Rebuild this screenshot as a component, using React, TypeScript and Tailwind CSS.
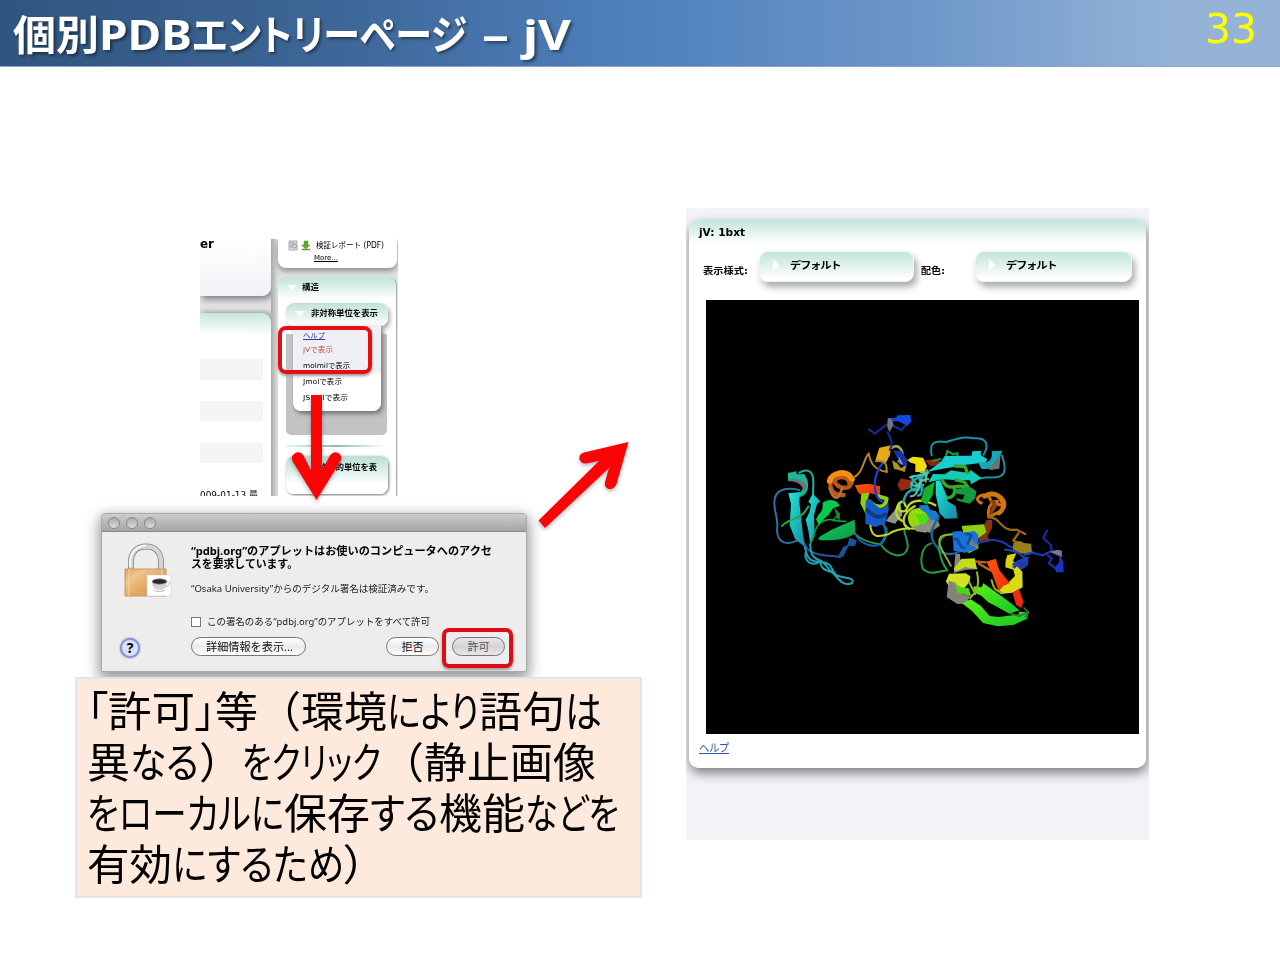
import { useLayoutEffect, useRef, type ReactNode } from 'react';

/** Keeps a run of text on one line and fits it to the given width. */
function Fit({ w, className = '', children }: { w: number; className?: string; children: ReactNode }) {
  const ref = useRef<HTMLSpanElement>(null);
  useLayoutEffect(() => {
    const el = ref.current;
    if (!el) return;
    el.style.transform = 'none';
    const natural = el.getBoundingClientRect().width;
    if (natural > 0) el.style.transform = `scaleX(${w / natural})`;
  }, [w]);
  return (
    <span className={`block shrink-0 whitespace-pre ${className}`} style={{ width: w }}>
      <span ref={ref} className="inline-block origin-left">{children}</span>
    </span>
  );
}

const verdana = "font-['DejaVu_Sans','Noto_Sans_CJK_JP',sans-serif]";
const lucida = "font-['Noto_Sans','Noto_Sans_CJK_JP',sans-serif]";
const palt = "[font-feature-settings:'palt']";

function Header() {
  return (
    <header className="flex h-[67px] shrink-0 items-start justify-between border-b border-[#8aa3c4] bg-[linear-gradient(90deg,#30557f_0%,#3d6596_25%,#4f81bd_50%,#6d97c9_72%,#95b3d7_92%,#95b3d7_100%)]">
      <h1 className={`flex items-baseline pl-[13px] pt-[4px] text-[41px] leading-[60px] font-bold text-white [text-shadow:2px_2px_3px_rgba(0,0,0,0.45)] ${lucida}`}>
        <Fit w={86}>個別</Fit>
        <Fit w={93} className="text-[42px]">PDB</Fit>
        <Fit w={275} className={palt}>エントリーページ</Fit>
        <span className="w-[15px]" />
        <Fit w={27}>–</Fit>
        <span className="w-[14px]" />
        <Fit w={48} className="text-[42px]">jV</Fit>
      </h1>
      <div className={`pr-[23px] text-[40px] leading-[58px] text-[#ffff00] ${verdana}`}>
        <Fit w={52}>33</Fit>
      </div>
    </header>
  );
}

function SiteCrop() {
  return (
    <section className={`relative flex h-[257px] w-[198px] overflow-hidden bg-[#e4e4e6] text-black ${verdana}`}>
      <div className="flex w-[71px] shrink-0 flex-col">
        <div className="h-[57px] shrink-0 rounded-br-[9px] bg-linear-to-b from-white to-[#eff2f7] shadow-[2px_3px_7px_#777]">
          <Fit w={14} className="text-[12px] leading-[11px] font-bold">er</Fit>
        </div>
        <div className="mt-[17px] flex grow flex-col rounded-tr-[9px] bg-[linear-gradient(#c5e7de,#fff_22px)] shadow-[2px_0_6px_#777]">
          <div className="mt-[46px] h-[21px] w-[63px] bg-[#f4f4f4]" />
          <div className="mt-[21px] h-[20px] w-[63px] bg-[#f4f4f4]" />
          <div className="mt-[22px] h-[20px] w-[63px] bg-[#f4f4f4]" />
          <Fit w={58} className="mt-[27px] text-[9px] leading-[11px]">009-01-13 最</Fit>
        </div>
      </div>
      <div className="w-[7px] shrink-0 bg-linear-to-r from-[#aaa] to-[#e0e0e2]" />
      <div className="flex w-[119px] shrink-0 flex-col">
        <div className="h-[29px] shrink-0 rounded-b-[8px] bg-white shadow-[0_3px_6px_#888]">
          <div className="flex items-center pl-[10px] pt-[1px]">
            <svg width="22" height="11" viewBox="0 0 22 11">
              <path d="M1 1h8v9H1z" fill="#ddd" stroke="#aaa" />
              <path d="M2 3h5M2 5h4M2 7h3" stroke="#888" strokeWidth=".7" />
              <circle cx="6.5" cy="6" r="2" fill="#d4dbe0" stroke="#888" strokeWidth=".7" />
              <path d="M16 1h4v4h2l-4.2 4L13.5 5H16zM14 9h8v1h-8z" fill="#62a62c" stroke="#458b1d" strokeWidth=".4" />
            </svg>
            <Fit w={68} className="ml-[6px] text-[8px] leading-[11px]">検証レポート (PDF)</Fit>
          </div>
          <Fit w={24} className="ml-[36px] mt-[2px] text-[7px] leading-[10px] [&>span]:underline">More...</Fit>
        </div>
        <div className="mt-[9px] flex grow flex-col rounded-t-[8px] border-r border-[#aaa] bg-[linear-gradient(#bfe3da,#fff_22px)]">
          <div className="flex h-[26px] shrink-0 items-center pl-[9px] pb-[5px]">
            <svg width="10" height="5" viewBox="0 0 10 5"><path d="M0 0h10L5 5z" fill="#fff" /></svg>
            <Fit w={17} className="ml-[5px] text-[8px] leading-[12px] font-bold">構造</Fit>
          </div>
          <div className="relative z-10 ml-[8px] flex h-[23px] w-[102px] shrink-0 items-center rounded-[8px] bg-linear-to-b from-[#bee2da] to-white pl-[9px] pb-[2px] shadow-[2px_3px_4px_#aaa]">
            <svg width="10" height="6" viewBox="0 0 10 6"><path d="M0 0h10L5 6z" fill="#fff" /></svg>
            <Fit w={67} className="ml-[6px] text-[8px] leading-[12px] font-bold">非対称単位を表示</Fit>
          </div>
          <div className="-mt-px ml-[8px] flex h-[110px] w-[101px] shrink-0 items-start rounded-b-[5px] bg-[linear-gradient(transparent_9px,#c3c3c3_9px)] pl-[7px]">
            <div className="relative z-10 h-[86px] w-[88px] rounded-b-[8px] bg-[linear-gradient(#eef0f3_0_46px,#fff_50px)] pl-[10px] pt-[5px] text-[7px] shadow-[2px_3px_4px_#777]">
              <Fit w={22} className="leading-[13px] text-[#3333aa] [&>span]:underline">ヘルプ</Fit>
              <Fit w={30} className="leading-[15px] text-[#c04a4a]">jVで表示</Fit>
              <Fit w={47} className="leading-[16px]">molmilで表示</Fit>
              <Fit w={39} className="leading-[16px]">Jmolで表示</Fit>
              <Fit w={45} className="leading-[16px]">JSmolで表示</Fit>
            </div>
          </div>
          <div className="ml-[8px] mt-[10px] h-[2px] w-[100px] shrink-0 bg-linear-to-r from-[#eaf5f2] via-[#86bdb1] to-white" />
          <div className="ml-[8px] mt-[9px] h-[38px] w-[102px] shrink-0 rounded-[8px] bg-[linear-gradient(#b9dfd6,#fff_28px)] pl-[25px] pt-[6px] shadow-[1px_1px_3px_#777]">
            <Fit w={66} className="text-[8px] leading-[12px] font-bold">生物学的単位を表</Fit>
          </div>
        </div>
      </div>
    </section>
  );
}

function MacButton({ w, textW, label, dim = false }: { w: number; textW: number; label: string; dim?: boolean }) {
  return (
    <button
      className={`flex h-[19px] shrink-0 items-center justify-center rounded-full border border-[#777] text-[11px] leading-[15px] ${
        dim ? 'bg-linear-to-b from-[#e9e9ec] via-[#d4d4d8] to-[#e8e8ea] text-[#555]' : 'bg-linear-to-b from-white via-[#ececec] to-white text-[#111]'
      }`}
      style={{ width: w }}
    >
      <Fit w={textW}>{label}</Fit>
    </button>
  );
}

function LockIcon() {
  return (
    <svg width="50" height="56" viewBox="0 0 50 56" className="shrink-0">
      <defs>
        <linearGradient id="brass" x2="1" y2="1">
          <stop stopColor="#d9a565" /><stop offset=".25" stopColor="#f0c48c" /><stop offset=".5" stopColor="#e6ae6a" /><stop offset="1" stopColor="#d09048" />
        </linearGradient>
      </defs>
      <path d="M7 27V20C7 10 13 4.500 22 4.500S37 10 37 20V27" fill="none" stroke="#858585" strokeWidth="6" />
      <path d="M7 27V20C7 10 13 4.500 22 4.500S37 10 37 20V27" fill="none" stroke="#d4d4d4" strokeWidth="4.400" />
      <path d="M6 25V19C7 10 13 4 22 3.500" fill="none" stroke="#fff" strokeWidth="1.500" />
      <path d="M1 27h41v27H1z" fill="url(#brass)" stroke="#c59a62" />
      <path d="M5 27v27M38 27v7" stroke="#f4d3a5" />
      <path d="M23 33h24v21H23z" fill="#fff" stroke="#ccc" strokeWidth=".6" />
      <path d="M28 40c0 6 4 8 8 8s7-2 7-8z" fill="#d4d4d4" />
      <ellipse cx="35.500" cy="39.500" rx="7.500" ry="2.800" fill="#302520" stroke="#aaa" strokeWidth=".8" />
      <path d="M42 40c5-2 5 3 0 5M30 48c3 2 8 2 11 0" fill="none" stroke="#b5b5b5" />
    </svg>
  );
}

function AppletDialog() {
  return (
    <section className={`flex h-[159px] w-[426px] flex-col rounded-t-[4px] border border-[#aaa] bg-[#ededed] text-black shadow-[0_5px_14px_2px_rgba(0,0,0,0.42)] ${lucida}`}>
      <div className="flex h-[18px] shrink-0 items-center gap-[6px] rounded-t-[3px] border-b border-[#888] bg-linear-to-b from-[#cdcdcd] to-[#a5a5a5] pl-[6px]">
        {[0, 1, 2].map((i) => (
          <span key={i} className="size-[12px] rounded-full border border-[#888] bg-linear-to-b from-[#aaa] to-[#ddd]" />
        ))}
      </div>
      <div className="flex grow">
        <div className="flex w-[89px] shrink-0 flex-col pl-[18px] pt-[10px]">
          <div className="pl-[4px]"><LockIcon /></div>
          <span className="mt-[40px] flex size-[20px] items-center justify-center rounded-full border-2 border-[#8496d6] bg-[#dce0fc] text-[14px] leading-none font-bold shadow-[0_0_2px_#6379d4]">?</span>
        </div>
        <div className="flex w-[322px] flex-col pt-[12px]">
          <Fit w={301} className="text-[11px] leading-[13px] font-bold">“pdbj.org”のアプレットはお使いのコンピュータへのアクセ</Fit>
          <Fit w={107} className="text-[11px] leading-[14px] font-bold">スを要求しています。</Fit>
          <Fit w={243} className="mt-[11px] text-[9.500px] leading-[13px] text-[#222]">“Osaka University”からのデジタル署名は検証済みです。</Fit>
          <div className="mt-[20px] flex items-center">
            <span className="size-[10px] border border-[#777] bg-white" />
            <Fit w={223} className="ml-[6px] text-[9.500px] leading-[13px] text-[#222]">この署名のある“pdbj.org”のアプレットをすべて許可</Fit>
          </div>
          <div className="mt-[9px] flex items-center">
            <MacButton w={115} textW={87} label="詳細情報を表示..." />
            <span className="w-[80px]" />
            <MacButton w={53} textW={22} label="拒否" />
            <span className="w-[13px]" />
            <MacButton w={53} textW={22} label="許可" dim />
          </div>
        </div>
      </div>
    </section>
  );
}

type Run = [text: string, width: number, proportional?: boolean];

const noteLines: Run[][] = [
  [['「', 21, true], ['許可', 87], ['」', 20, true], ['等', 43], ['（', 43], ['環境', 86], ['により', 92, true], ['語句', 86], ['は', 37, true]],
  [['異', 43], ['なる', 69, true], ['）', 43], ['をクリック', 139, true], ['（', 43], ['静止画像', 172]],
  [['をローカルに', 197, true], ['保存', 86], ['する', 69, true], ['機能', 86], ['などを', 94, true]],
  [['有効', 85], ['にするため', 172, true], ['）', 22, true]],
];

function Note() {
  return (
    <section className="h-[221px] w-[567px] border-2 border-[#e4e4e8] bg-[#fdeadd] pl-[10px] pt-[4px] text-black">
      {noteLines.map((line, i) => (
        <p key={i} className="flex h-[51px] text-[42.500px] leading-[51px] font-['Noto_Sans_CJK_JP',sans-serif]">
          {line.map(([text, w, prop], j) => (
            <Fit key={j} w={w} className={prop ? palt : ''}>{text}</Fit>
          ))}
        </p>
      ))}
    </section>
  );
}

function Molecule() {
  return (
    <svg width="433" height="434" viewBox="706 300 433 434" className="block bg-black" fill="none" strokeLinecap="round" strokeLinejoin="round">
      <defs>
        <linearGradient id="cy" x2="1" y2="1"><stop stopColor="#1ee8d4" /><stop offset="1" stopColor="#1588a8" /></linearGradient>
        <linearGradient id="gr" x2="1" y2="1"><stop stopColor="#0bd05c" /><stop offset="1" stopColor="#10974a" /></linearGradient>
        <linearGradient id="lime" x2="1" y2="1"><stop stopColor="#5cf014" /><stop offset="1" stopColor="#12c628" /></linearGradient>
        <linearGradient id="rd" x2="1" y2="1"><stop stopColor="#ff5a0c" /><stop offset="1" stopColor="#ef2810" /></linearGradient>
      </defs>
      <g transform="translate(760 400) scale(.33333)">
        <path d="M118 270C80 262 45 266 43 305C42 340 57 356 51 389C52 426 75 436 105 424L130 418" stroke="#2873a4" strokeWidth="6" />
        <path d="M118 218C148 202 161 218 160 248L159 292" stroke="#16b6a0" strokeWidth="6" />
        <path d="M84 219L109 214L110 223L132 222C151 245 149 283 120 291L91 288C120 286 137 264 126 253C115 239 93 246 84 239z" fill="#16ba98" />
        <path d="M84 240C110 230 138 244 140 260L132 274C123 246 104 244 84 244z" fill="#707078" />
        <path d="M85 280L120 276L118 306L130 414L138 444L105 416L89 376L93 312z" fill="url(#cy)" />
        <path d="M158 281L181 304L171 313L162 346L164 409L151 436L145 391L137 359L149 335L153 313L145 305z" fill="url(#cy)" />
        <path d="M66 378C80 359 109 361 132 339L145 320" stroke="#22a94a" strokeWidth="6" />
        <path d="M188 308C212 290 238 305 238 318L220 324L205 346C190 355 184 370 177 377L168 358L177 342C190 331 188 320 188 308z" fill="#08cb4d" />
        <path d="M222 321L240 341L239 361L227 352L224 366L215 362L229 346z" fill="#128a3a" />
        <path d="M185 366C212 349 224 367 257 364M175 375C162 389 165 407 149 435" stroke="#199640" strokeWidth="5" />
        <path d="M181 409L218 388L284 359L286 400C258 421 217 421 181 421L174 417z" fill="url(#gr)" />
        <path d="M136 435C146 470 212 465 241 471" stroke="#22589a" strokeWidth="6" />
        <path d="M268 413L290 421L286 437L265 439L249 471L235 467L250 440L262 436z" fill="#17559b" />
        <path d="M135 442C142 478 152 487 185 486C222 488 213 519 232 527C250 535 287 531 276 549C252 561 235 537 220 520C201 506 198 488 177 480C157 475 151 455 151 435M136 460C135 490 160 497 178 486M181 488C186 518 214 509 225 523" stroke="#20a1b3" strokeWidth="6" />
        <path d="M284 401C307 424 338 430 362 433C386 409 385 382 365 370M362 433C382 464 424 480 441 450C450 431 433 407 433 390" stroke="#279643" strokeWidth="6" />
        <path d="M290 409C308 437 342 441 359 434C380 413 381 394 371 374" stroke="#1664b6" strokeWidth="6" />
        <path d="M251 285C203 289 201 238 231 222C259 204 291 237 267 260C249 268 230 261 223 243C240 220 270 235 268 252" stroke="#bb5812" strokeWidth="13" />
        <path d="M209 243C213 219 260 207 276 237" stroke="#f48f14" strokeWidth="17" />
        <path d="M209 265C216 290 232 305 240 281L247 264" stroke="#b86c48" strokeWidth="8" />
        <path d="M280 233C311 219 308 181 326 160C330 183 339 210 380 215" stroke="#b58521" strokeWidth="6" />
        <path d="M284 256L325 251L360 259L360 288L330 279L298 282z" fill="url(#rd)" />
        <path d="M304 280L329 278L321 304L327 334L338 352L316 340L301 310z" fill="#8cd010" />
        <path d="M328 304C351 326 377 325 380 296L356 289" stroke="#91d00c" strokeWidth="12" />
        <path d="M317 303C329 286 340 312 359 324C376 328 388 310 385 298L386 330L375 371L345 381L316 371z" fill="#145bc8" />
        <path d="M322 330C339 351 363 357 377 342" stroke="#113c82" strokeWidth="12" />
        <path d="M331 377C335 414 355 412 385 403C399 392 423 384 465 386" stroke="#bfd52c" strokeWidth="6" />
        <path d="M380 176C352 202 336 244 348 281C351 294 358 299 366 305" stroke="#1742bd" strokeWidth="7" />
        <path d="M358 143L393 136L390 164L378 188L360 184L346 181z" fill="#e6aa12" />
        <path d="M348 184C385 176 380 209 380 217" stroke="#b38a27" strokeWidth="6" />
        <path d="M396 143C416 129 431 150 427 178L416 183" stroke="#aca050" strokeWidth="8" />
        <path d="M396 181L412 190L423 205L440 193L434 216L416 210L402 207z" fill="#a9941f" />
        <path d="M399 151L424 153L443 181L440 197L421 195L413 176z" fill="#1531a4" />
        <path d="M416 169L430 194L418 190z" fill="#9696a5" />
        <path d="M382 96C398 120 397 139 389 150M327 88L344 101L385 70M391 72L424 90L442 71" stroke="#142b99" strokeWidth="6" />
        <path d="M383 55L397 54L400 76L388 97L382 81z" fill="#77757c" />
        <path d="M391 56L410 52L412 46L451 45L454 64L442 77L414 64L397 64z" fill="#1548e3" />
        <path d="M442 180L458 170L489 173L501 198L494 216L466 216L466 192L452 188z" fill="#f0de0c" />
        <path d="M423 235L450 241L461 231L455 263L422 273L412 254z" fill="#942a10" />
        <path d="M494 180L530 177L551 189L512 200z" fill="#951e12" />
        <path d="M421 307C409 330 385 350 378 363L405 371L427 346z" fill="#8d9386" />
        <path d="M464 319C436 334 415 366 447 386M417 310C406 327 403 348 425 362M437 318C430 289 405 315 421 333C453 341 428 307 476 302C498 302 509 306 526 316" stroke="#bed829" strokeWidth="7" />
        <path d="M464 326L490 321L516 337L513 349C491 349 489 370 512 374C495 389 471 382 458 383C435 365 442 331 464 326z" fill="#95d90d" />
        <path d="M472 378C493 366 502 348 513 329L530 350L540 377L508 399z" fill="#85857d" />
        <path d="M455 270C448 228 485 239 502 211M456 270C500 279 459 237 505 218M430 307C439 257 472 275 472 258C464 239 453 240 457 228M475 231C486 244 480 258 488 269M474 287C496 281 477 263 490 254" stroke="#22aab6" strokeWidth="7" />
      </g>
      <g transform="translate(910 400) scale(.33333)">
        <path d="M65 166C57 128 74 121 108 126C136 119 161 107 190 115C235 112 236 138 221 164M276 167C294 219 283 236 235 232L210 235" stroke="#1992a4" strokeWidth="6" />
        <path d="M109 165L112 153L129 163L142 159L142 177M69 183L90 177" stroke="#12923b" strokeWidth="7" />
        <path d="M51 216L93 185L104 168L185 167L187 154L213 152L212 165L232 178L215 206L206 190L168 194L82 209z" fill="#17ced3" />
        <path d="M206 184C232 195 250 180 245 153L277 152L270 170C265 196 245 210 215 206z" fill="#13a9bd" />
        <path d="M232 205C249 198 256 177 272 162L268 206L242 210z" fill="#69747c" />
        <path d="M55 247L69 222L104 223L124 211L158 217L179 217L181 209L215 235L183 253L180 241L133 240L98 238z" fill="#12ccb5" />
        <path d="M135 198L165 200L172 218M97 241C114 277 138 252 163 260M138 240L163 246L175 263M102 283C114 306 138 287 133 265" stroke="#32a92c" strokeWidth="10" />
        <path d="M138 266L183 262L199 274L196 294L179 311L143 302L138 294L158 299L164 284L137 281z" fill="#119b42" />
        <path d="M44 263L74 245L68 285L50 314L32 303z" fill="#18b02a" />
        <path d="M77 243L90 241L104 272L113 304L137 318L143 355L105 356L89 340L77 282z" fill="url(#cy)" />
        <path d="M0 232C17 225 31 229 51 218L47 245M4 250C22 276 29 232 55 238M2 289C24 290 26 255 34 245M30 240C57 247 50 211 32 217" stroke="#5ac7a0" strokeWidth="6" />
        <path d="M15 342L45 342L57 355L46 374L34 374z" fill="#4fdc12" />
        <path d="M12 379C42 374 74 364 90 353L72 381L48 398L18 394z" fill="#8e9085" />
        <path d="M28 316L54 315L60 329L77 333L89 348L80 364L62 358L46 338L29 326z" fill="#167bd2" />
        <path d="M83 357C55 396 65 425 83 443C86 458 119 469 145 456" stroke="#18698a" strokeWidth="7" />
        <path d="M63 430C34 439 29 480 39 507C62 528 86 513 112 511C92 485 75 429 100 410C112 399 130 405 143 401" stroke="#279b3b" strokeWidth="6" />
        <path d="M123 498C107 466 75 426 93 410C109 399 125 409 145 399" stroke="#9cb332" strokeWidth="5" />
        <path d="M214 309C187 298 213 277 235 288L248 310L270 314M235 286C277 272 306 321 264 337L237 351C229 315 253 303 263 304" stroke="#d06e12" strokeWidth="9" />
        <path d="M224 289C243 275 272 281 279 309C282 323 275 333 267 339" stroke="#d4780d" strokeWidth="14" />
        <path d="M240 300L255 301L262 318L246 343L237 340L248 316z" fill="#87440e" />
        <path d="M234 351C275 352 270 396 319 389L346 402M325 400L310 422L338 434" stroke="#9d6420" strokeWidth="7" />
        <path d="M229 361L247 359L246 385L233 408L239 425L209 429L203 408L216 386z" fill="#863310" />
        <path d="M155 378L222 373L229 397L204 415L205 445L178 459L151 448L144 420L161 404z" fill="#8fd112" />
        <path d="M173 404L202 403L205 439L178 450L159 421z" fill="#767e7a" />
        <path d="M127 395L153 393L161 399L194 393L205 405L202 432L190 428L181 405L174 431L207 447L165 458L131 452z" fill="#1872d7" />
        <path d="M132 418C151 409 144 445 163 444M166 401L185 405L173 431" stroke="#114ca0" strokeWidth="8" />
        <path d="M205 429C234 414 272 416 298 439M298 439L348 453L397 466L422 454" stroke="#2036b2" strokeWidth="6" />
        <path d="M310 429L330 423L342 429L363 431L366 457L350 462L321 458L308 447z" fill="#978116" />
        <path d="M287 481L292 465L319 460L309 484L337 499L320 512L286 502z" fill="#d6d20d" />
        <path d="M306 492L348 470L359 470L345 495L325 515z" fill="#2a36ae" />
        <path d="M311 492C345 472 357 478 350 494C335 508 321 510 311 500M286 449C329 453 345 470 350 490M345 464L369 457" stroke="#1547b3" strokeWidth="7" />
        <path d="M310 511L321 499L337 515L338 562L308 578L271 582L266 559L290 553L315 528z" fill="#dbda11" />
        <path d="M195 484L227 487M207 491L241 511" stroke="#ba6720" strokeWidth="7" />
        <path d="M229 485L257 476L268 511L299 549L280 557L266 574L247 521z" fill="url(#rd)" />
        <path d="M308 580L327 566L340 605L334 624L318 614z" fill="#ef2c13" />
        <path d="M136 461L150 462L151 479L186 484L203 508L167 509L131 519z" fill="#888583" />
        <path d="M131 507L154 477L194 475L201 508L166 501L139 514z" fill="#c0de1b" />
        <path d="M117 521L167 520L181 529L179 546L165 562L143 579L117 561L108 544z" fill="#d2e420" />
        <path d="M116 542L137 548L143 579L179 587L171 611L142 612L110 591z" fill="#85827b" />
        <path d="M142 563L126 545L152 561L176 565L184 589L161 583L139 580z" fill="#48d813" />
        <path d="M182 598L212 617L239 648L266 651L328 643L325 635L357 636L350 657L310 675L264 679L219 669L187 634L156 610z" fill="url(#lime)" />
        <path d="M191 559L215 562L220 550L278 591L302 609L328 631L298 641L262 621L235 607L214 587L191 577z" fill="url(#lime)" />
        <path d="M177 546L196 582M201 517C211 562 196 580 180 594M245 541C253 577 263 569 276 580" stroke="#91b826" strokeWidth="6" />
        <path d="M303 641L328 649L354 636L342 624L356 637L346 651" stroke="#35733b" strokeWidth="5" />
        <path d="M411 392L400 414L422 435L425 449M413 466L426 476L416 490L448 512M425 453L454 467" stroke="#1827a4" strokeWidth="7" />
        <path d="M418 455L442 449L456 452L455 472L432 461z" fill="#73779b" />
        <path d="M448 463L460 485L461 517L439 517L434 503L448 487z" fill="#1734c1" />
      </g>
    </svg>
  );
}

function Picker({ w, label }: { w: number; label: string }) {
  return (
    <div className="flex h-[31px] shrink-0 items-center rounded-[9px] border border-[#edf5f3] bg-[linear-gradient(#c1e4dc,#fff_27px)] pl-[13px] pb-[3px] shadow-[3px_5px_7px_#aaa]" style={{ width: w }}>
      <svg width="6" height="12" viewBox="0 0 6 12"><path d="M0 0l6 6-6 6z" fill="#fff" /></svg>
      <Fit w={51} className={`ml-[11px] text-[10px] leading-[15px] font-bold ${palt}`}>{label}</Fit>
    </div>
  );
}

function ViewerPanel() {
  return (
    <section className={`h-[632px] w-[463px] shrink-0 overflow-hidden bg-[#f4f4f8] pl-[3px] pt-[12px] text-black ${verdana}`}>
      <div className="flex h-[548px] w-[457px] flex-col rounded-[10px] bg-[linear-gradient(#c1e5db,#fff_23px)] shadow-[1px_5px_12px_rgba(0,0,0,0.5)]">
        <Fit w={46} className="ml-[10px] mt-[6px] text-[10px] leading-[13px] font-bold">jV: 1bxt</Fit>
        <div className="mt-[12px] flex h-[32px] shrink-0 items-start pl-[14px]">
          <Fit w={45} className="mt-[12px] text-[9px] leading-[16px] font-bold">表示様式:</Fit>
          <span className="w-[11px] shrink-0" />
          <Picker w={155} label="デフォルト" />
          <Fit w={24} className="ml-[7px] mt-[12px] text-[9px] leading-[16px] font-bold">配色:</Fit>
          <span className="w-[30px] shrink-0" />
          <Picker w={157} label="デフォルト" />
        </div>
        <div className="ml-[17px] mt-[17px] h-[434px] w-[433px] shrink-0"><Molecule /></div>
        <Fit w={30} className={`ml-[10px] mt-[7px] text-[11px] leading-[16px] text-[#3553ac] [&>span]:underline ${palt}`}>ヘルプ</Fit>
      </div>
    </section>
  );
}

export default function App() {
  return (
    <div className="relative flex h-[960px] w-[1280px] flex-col overflow-hidden bg-white">
      <Header />
      <main className="flex grow items-start">
        <div className="flex w-[686px] shrink-0 flex-col pt-[172px]">
          <div className="ml-[200px]"><SiteCrop /></div>
          <div className="ml-[101px] mt-[17px]"><AppletDialog /></div>
          <div className="relative ml-[75px] mt-[5px]"><Note /></div>
        </div>
        <div className="pt-[141px]"><ViewerPanel /></div>
      </main>
      {/* Callouts laid over the captured windows */}
      <div className="absolute left-[278px] top-[326px] z-30 h-[48px] w-[94px] rounded-[8px] border-4 border-[#e60d14] shadow-[0_2px_3px_#999]" />
      <div className="absolute left-[442px] top-[628px] z-30 h-[40px] w-[71px] rounded-[7px] border-4 border-[#df0c16] shadow-[0_2px_3px_#999]" />
      <svg className="pointer-events-none absolute left-0 top-0 z-30 drop-shadow-[0_2px_2px_rgba(0,0,0,0.3)]" width="1280" height="960" viewBox="0 0 1280 960" fill="#fa0505">
        <path d="M311 395H322V470L330 455.500Q334 450 339 453.500Q343 457 340 462L316.500 500L293 462Q290 457 294.500 453.500Q300 450 303.500 455.500L311 470Z" />
        <path d="M538.500 520.500L599 461L586 463.500Q580 463.500 579.300 458Q579.500 453.500 584 452.500L628.500 442L616.500 484Q614 490 608.500 489Q604 487 605 482L609 468L545 528Z" />
      </svg>
    </div>
  );
}
